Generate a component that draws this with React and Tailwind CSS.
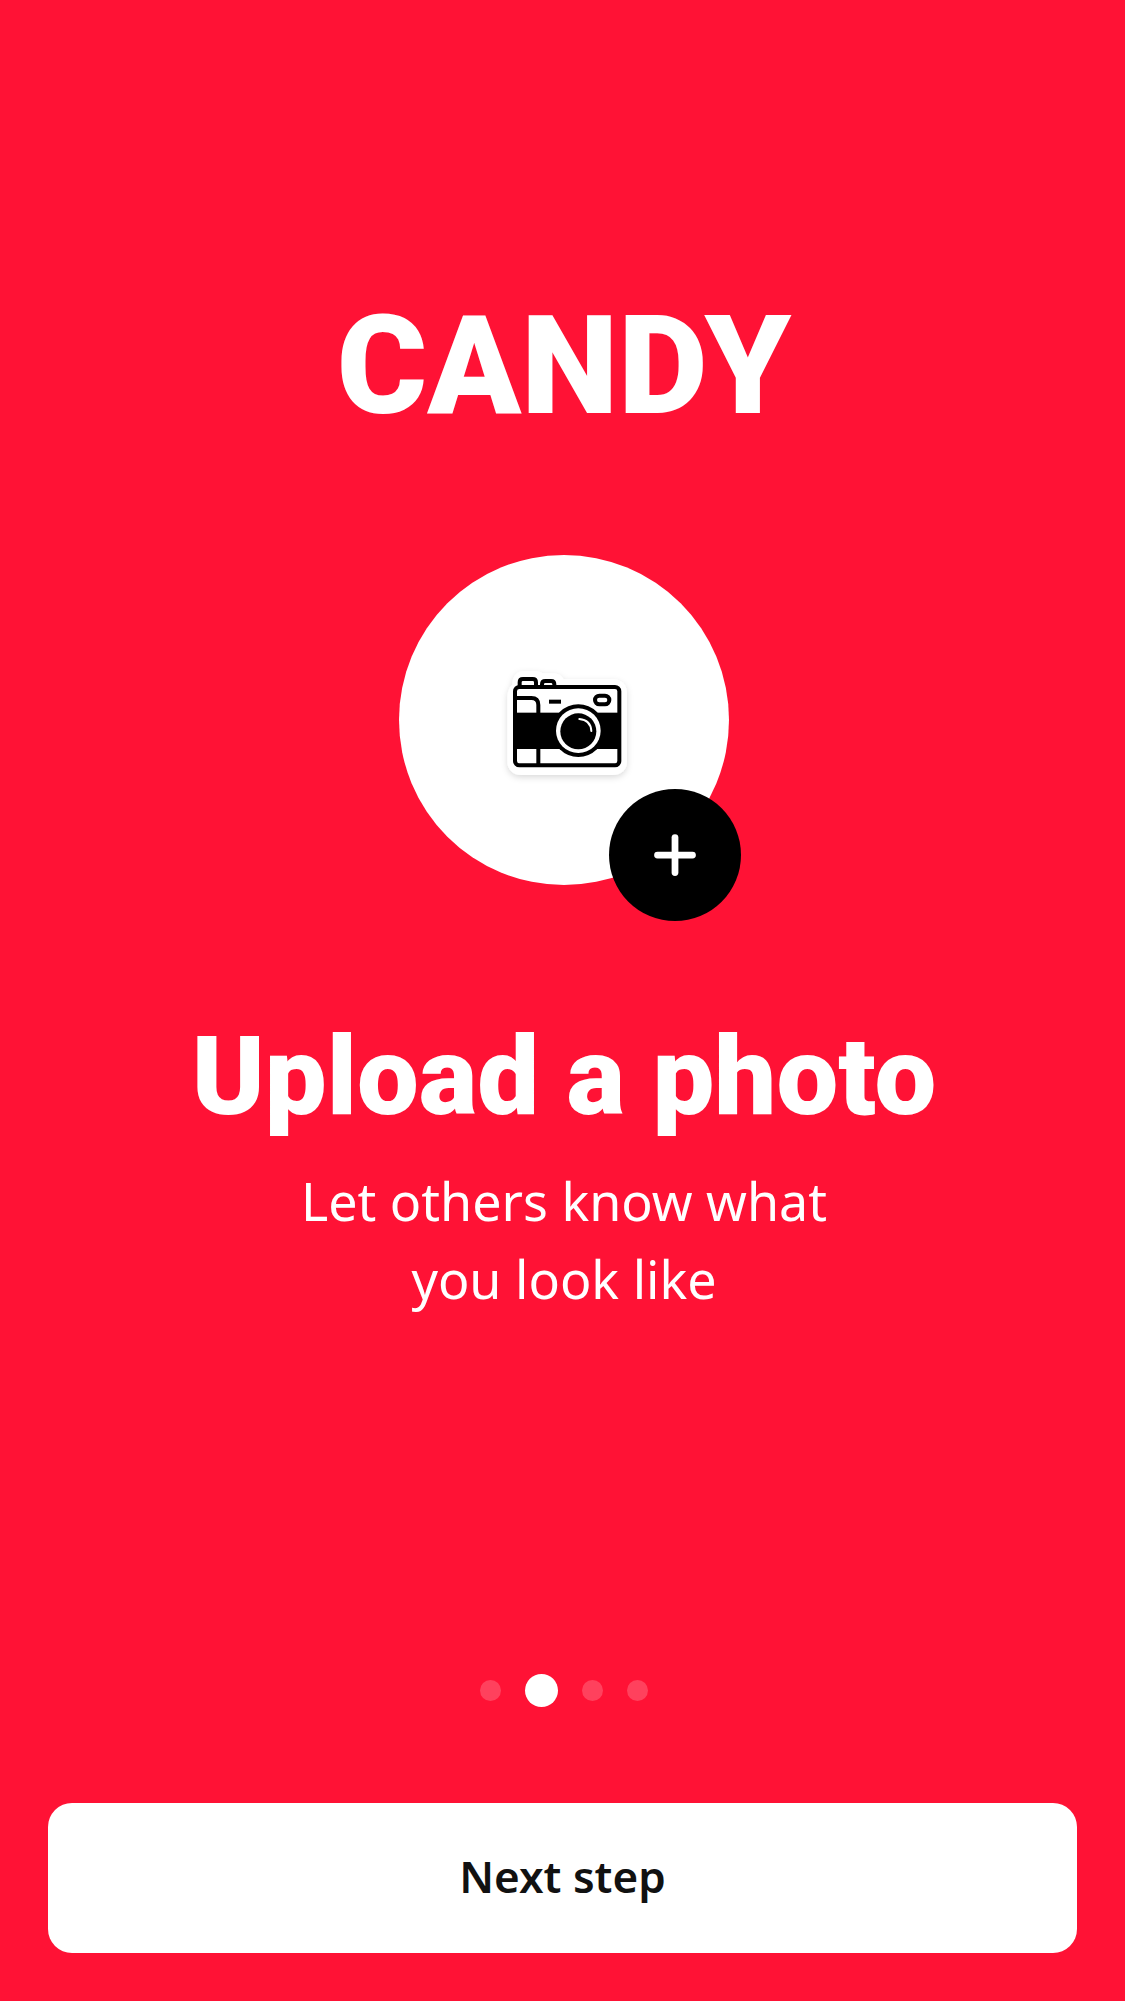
import { Plus } from "lucide-react";

const STEPS = ["Welcome", "Upload a photo", "Interests", "Finish"];
const CURRENT_STEP = 1;

function CameraSticker() {
  return (
    <svg
      viewBox="-3 -15 450 390"
      className="h-[130px] w-[150px] overflow-visible"
      fill="none"
      aria-hidden="true"
    >
      <defs>
        <filter id="sticker-shadow" x="-20%" y="-20%" width="140%" height="150%">
          <feDropShadow dx="0" dy="7" stdDeviation="9" floodColor="#000" floodOpacity="0.15" />
        </filter>
      </defs>
      <path
        filter="url(#sticker-shadow)"
        fill="#fff"
        d="M52 116c0-20 6-35 15-42 0-24 12-40 34-41h36c9 0 15 3 21 7h28c19 0 30 7 34 18h148c27 0 43 17 43 41v205c0 25-17 41-43 41H94c-26 0-42-17-42-42z"
      />
      <g stroke="#000" strokeWidth="12">
        <path fill="#fff" d="M89 82V67q0-10 10-10h29q10 0 10 10v15" />
        <path fill="#fff" d="M156 82v-9q0-10 10-10h17q10 0 10 10v9" />
        <rect x="75" y="81" width="313" height="235" rx="13" fill="#fff" />
        <path d="M75 114h49q21 0 21 21v28M145 262v54" />
        <rect x="315" y="107" width="43" height="26" rx="13" />
        <path d="M177 125h36" />
      </g>
      <rect x="70" y="158" width="323" height="109" fill="#000" />
      <circle cx="265" cy="212" r="79" fill="#000" />
      <circle cx="265" cy="212" r="67" fill="#fff" />
      <circle cx="265" cy="214" r="54" fill="#000" />
      <path d="M268 177q34 3 36 36" stroke="#fff" strokeWidth="6" strokeLinecap="round" />
    </svg>
  );
}

export default function App() {
  return (
    <div className="flex min-h-screen flex-col bg-[#ff1235] px-12 pb-12 font-['Noto_Sans','Open_Sans',sans-serif] text-white">
      <main className="flex flex-1 flex-col items-center pl-[3px] pt-[294px] text-center">
        <p className="font-['Roboto',sans-serif] text-[138px] font-black leading-[144px]">CANDY</p>

        <div className="relative mt-[117px] flex size-[330px] items-center justify-center rounded-full bg-white">
          <CameraSticker />
          <button
            type="button"
            aria-label="Add a photo"
            className="absolute -bottom-9 -right-3 flex size-[132px] items-center justify-center rounded-full bg-black text-white"
          >
            <Plus size={60} strokeWidth={2.7} aria-hidden="true" />
          </button>
        </div>

        <h1 className="mt-[132px] font-['Roboto',sans-serif] text-[110px] font-black leading-[120px]">
          Upload a photo
        </h1>
        <p className="mt-[25px] max-w-[600px] text-[52px] leading-[78px]">
          Let others know what you look like
        </p>
      </main>

      <footer className="flex flex-col gap-24">
        <nav aria-label="Steps" className="flex items-center justify-center gap-6 pl-[3px]">
          {STEPS.map((step, index) => (
            <button
              key={step}
              type="button"
              aria-label={step}
              aria-current={index === CURRENT_STEP ? "step" : undefined}
              className={
                index === CURRENT_STEP
                  ? "size-[33px] rounded-full bg-white"
                  : "size-[21px] rounded-full bg-white/20"
              }
            />
          ))}
        </nav>
        <button
          type="button"
          className="h-[150px] w-full rounded-3xl bg-white pb-1 text-[44px] font-semibold text-[#111]"
        >
          Next step
        </button>
      </footer>
    </div>
  );
}
